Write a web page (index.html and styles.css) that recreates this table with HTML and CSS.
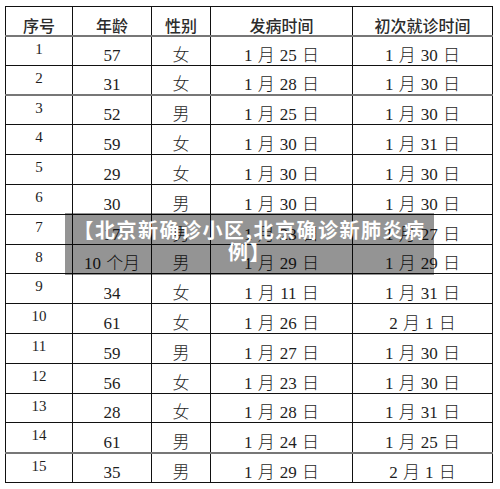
FILE: index.html
```html
<!DOCTYPE html>
<html lang="zh-CN">
<head>
<meta charset="utf-8">
<link rel="stylesheet" href="styles.css">
</head>
<body>
<div class="page">
  <table class="cases">
    <colgroup>
      <col class="c1"><col class="c2"><col class="c3"><col class="c4"><col class="c5">
    </colgroup>
    <thead>
      <tr><th>序号</th><th>年龄</th><th>性别</th><th>发病时间</th><th>初次就诊时间</th></tr>
    </thead>
    <tbody>
      <tr><td>1</td><td>57</td><td>女</td><td>1 月 25 日</td><td>1 月 30 日</td></tr>
      <tr class="gray"><td>2</td><td>31</td><td>女</td><td>1 月 28 日</td><td>1 月 30 日</td></tr>
      <tr><td>3</td><td>52</td><td>男</td><td>1 月 25 日</td><td>1 月 30 日</td></tr>
      <tr><td>4</td><td>59</td><td>女</td><td>1 月 30 日</td><td>1 月 31 日</td></tr>
      <tr><td>5</td><td>29</td><td>女</td><td>1 月 30 日</td><td>1 月 30 日</td></tr>
      <tr><td>6</td><td>30</td><td>男</td><td>1 月 30 日</td><td>1 月 30 日</td></tr>
      <tr><td>7</td><td>17</td><td>男</td><td>1 月 23 日</td><td>1 月 27 日</td></tr>
      <tr><td>8</td><td>10 个月</td><td>男</td><td>1 月 29 日</td><td>1 月 29 日</td></tr>
      <tr><td>9</td><td>34</td><td>女</td><td>1 月 11 日</td><td>1 月 31 日</td></tr>
      <tr><td>10</td><td>61</td><td>女</td><td>1 月 26 日</td><td>2 月 1 日</td></tr>
      <tr><td>11</td><td>59</td><td>男</td><td>1 月 27 日</td><td>1 月 30 日</td></tr>
      <tr><td>12</td><td>56</td><td>女</td><td>1 月 23 日</td><td>1 月 30 日</td></tr>
      <tr><td>13</td><td>28</td><td>女</td><td>1 月 28 日</td><td>1 月 31 日</td></tr>
      <tr class="gray"><td>14</td><td>61</td><td>男</td><td>1 月 24 日</td><td>1 月 25 日</td></tr>
      <tr><td>15</td><td>35</td><td>男</td><td>1 月 29 日</td><td>2 月 1 日</td></tr>
    </tbody>
  </table>
  <div class="caption">【北京新确诊小区,北京确诊新肺炎病例】</div>
</div>
</body>
</html>
```
FILE: styles.css
```css
html, body {
  margin: 0;
  padding: 0;
  background: #ffffff;
}

.page {
  position: relative;
  padding: 6px 0 0 5px;
}

.cases {
  border-collapse: collapse;
  table-layout: fixed;
  width: 487px;
  font-family: "Liberation Serif", "Noto Sans CJK SC", serif;
  font-weight: 300;
  color: #1e1e1e;
}

.c1 { width: 67px; }
.c2 { width: 79px; }
.c3 { width: 59px; }
.c4 { width: 142px; }
.c5 { width: 140px; }

.cases thead tr { height: 29px; }
.cases tbody tr { height: 29.8px; }

.cases th,
.cases td {
  border: 1.5px solid #111;
  padding: 0;
  text-align: center;
  white-space: nowrap;
  overflow: hidden;
}

.cases th {
  vertical-align: bottom;
  font-family: "Noto Sans CJK SC", sans-serif;
  font-weight: 500;
  font-size: 16px;
  line-height: 18px;
  color: #2c2c2c;
  padding-bottom: 1px;
  border-bottom: 2px solid #777;
}

.cases td {
  vertical-align: bottom;
  font-size: 17px;
  line-height: 17px;
  word-spacing: 1px;
  padding-bottom: 1px;
}

.cases td:first-child {
  vertical-align: top;
  font-size: 15px;
  line-height: 15px;
  padding-top: 5px;
  padding-bottom: 0;
}

.cases tr.gray td {
  border-bottom: 2px solid #777;
}

.caption {
  position: absolute;
  left: 65px;
  top: 213px;
  width: 369px;
  height: 62px;
  box-sizing: border-box;
  padding: 6px 8px 0;
  background: rgba(0, 0, 0, 0.42);
  color: #ffffff;
  font-family: "Noto Sans CJK SC", sans-serif;
  font-weight: 700;
  font-size: 20px;
  letter-spacing: 1.5px;
  line-height: 22px;
  text-align: center;
}
```
